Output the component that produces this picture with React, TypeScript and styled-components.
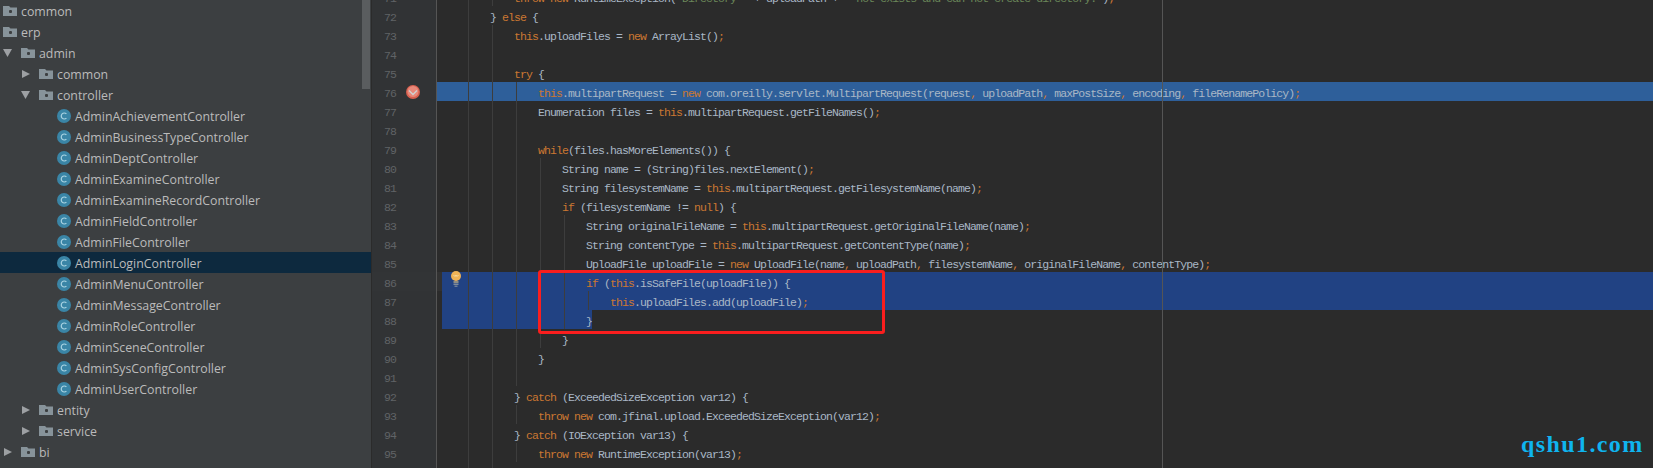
import React from "react";
import styled, { createGlobalStyle } from "styled-components";

const Global = createGlobalStyle`
  html, body { margin: 0; padding: 0; background: #2b2b2b; }
  #root { width: 1653px; height: 468px; overflow: hidden; }
`;

const Page = styled.div`
  position: relative;
  display: flex;
  width: 1653px;
  height: 468px;
  overflow: hidden;
`;

const Sidebar = styled.aside`
  position: relative;
  flex: none;
  width: 371px;
  height: 100%;
  overflow: hidden;
  background: #3c3f41;
`;

const Divider = styled.div`
  flex: none;
  width: 1px;
  background: #2b2b2b;
`;

const Scrollbar = styled.div`
  position: absolute;
  top: 0;
  right: 1px;
  width: 8px;
  height: 89px;
  background: #5a5d5f;
`;

const TreeRow = styled.div<{ $level: number; $selected?: boolean }>`
  display: flex;
  align-items: center;
  height: 21px;
  padding-left: ${(p) => 3 + p.$level * 18}px;
  background: ${(p) => (p.$selected ? "#0d293e" : "transparent")};
  color: #bbbbbb;
  font: 12.35px "Open Sans", sans-serif;
  white-space: nowrap;
`;

const TreeLabel = styled.span`
  padding-top: 1px;
`;

const ArrowBox = styled.svg`
  flex: none;
  width: 18px;
  height: 21px;
`;

const TreeIcon = styled.svg`
  flex: none;
  width: 14px;
  height: 21px;
  margin-right: 4px;
`;

const Editor = styled.main`
  position: relative;
  flex: 1;
  min-width: 0;
  height: 100%;
  overflow: hidden;
  background: #2b2b2b;
`;

const Lines = styled.div`
  margin-top: -13px;
`;

const Row = styled.div`
  display: flex;
  height: 19px;
`;

const Gutter = styled.div<{ $active?: boolean }>`
  flex: none;
  display: flex;
  align-items: center;
  box-sizing: border-box;
  width: 65px;
  height: 19px;
  padding-left: 12px;
  border-right: 1px solid #555555;
  background: ${(p) => (p.$active ? "#323436" : "#313335")};
`;

const LineNo = styled.span`
  flex: none;
  width: 22px;
  height: 19px;
  color: #606366;
  font: 11.5px/24px "Liberation Mono", monospace;
  letter-spacing: -0.9px;
`;

const Breakpoint = styled.svg`
  flex: none;
  width: 14px;
  height: 14px;
`;

type Tone = "plain" | "breakpoint" | "caret";

const CodeArea = styled.div<{ $tone: Tone }>`
  flex: 1;
  min-width: 0;
  display: flex;
  padding-left: 5px;
  background: ${(p) =>
    p.$tone === "breakpoint" ? "#2e5f9a" : p.$tone === "caret" ? "#323232" : "transparent"};
`;

const Code = styled.div<{ $selected?: "full" | "part" }>`
  display: flex;
  flex: ${(p) => (p.$selected === "part" ? "none" : 1)};
  width: ${(p) => (p.$selected === "part" ? "150px" : "auto")};
  height: 19px;
  min-width: 0;
  background: ${(p) => (p.$selected ? "#214283" : "transparent")};
  color: #a9b7c6;
  font: 11.5px/23px "Liberation Mono", monospace;
  letter-spacing: -0.9px;
  white-space: pre;
`;

const Indent = styled.span<{ $guide: boolean }>`
  flex: none;
  width: 24px;
  height: 19px;
  background: ${(p) =>
    p.$guide ? "linear-gradient(#3d3d3d, #3d3d3d) 2px 0 / 1px 100% no-repeat" : "none"};
`;

const Kw = styled.span`
  color: #cc7832;
`;

const Str = styled.span`
  color: #6a8759;
`;

const Margin = styled.div`
  position: absolute;
  top: 0;
  bottom: 0;
  left: 790px;
  width: 1px;
  background: #555555;
`;

const Bulb = styled.svg`
  position: absolute;
  left: 79px;
  top: 271px;
  width: 10px;
  height: 16px;
`;

const RedBox = styled.div`
  position: absolute;
  left: 166px;
  top: 270px;
  box-sizing: border-box;
  width: 347px;
  height: 64px;
  border: 3px solid #fa1e1e;
  border-radius: 3px;
`;

const Watermark = styled.div`
  position: absolute;
  left: 1149px;
  top: 430px;
  color: #0fb4ef;
  font: bold 24px/28px "Liberation Serif", serif;
  letter-spacing: 1.4px;
`;

type Node = { label: string; level: number; kind: "folder" | "class"; arrow?: "down" | "right"; selected?: boolean };

const tree: Node[] = [
  { label: "common", level: 0, kind: "folder" },
  { label: "erp", level: 0, kind: "folder" },
  { label: "admin", level: 0, kind: "folder", arrow: "down" },
  { label: "common", level: 1, kind: "folder", arrow: "right" },
  { label: "controller", level: 1, kind: "folder", arrow: "down" },
  ...[
    "AdminAchievementController",
    "AdminBusinessTypeController",
    "AdminDeptController",
    "AdminExamineController",
    "AdminExamineRecordController",
    "AdminFieldController",
    "AdminFileController",
    "AdminLoginController",
    "AdminMenuController",
    "AdminMessageController",
    "AdminRoleController",
    "AdminSceneController",
    "AdminSysConfigController",
    "AdminUserController",
  ].map((label): Node => ({ label, level: 3, kind: "class", selected: label === "AdminLoginController" })),
  { label: "entity", level: 1, kind: "folder", arrow: "right" },
  { label: "service", level: 1, kind: "folder", arrow: "right" },
  { label: "bi", level: 0, kind: "folder", arrow: "right" },
  { label: "", level: 0, kind: "folder", arrow: "right" },
];

type Line = { n: number; col?: number; text?: string; blank?: number; tone?: Tone; selected?: "full" | "part" };

const code: Line[] = [
  { n: 71, col: 12, text: 'throw new RuntimeException("Directory " + uploadPath + " not exists and can not create directory.");' },
  { n: 72, col: 8, text: "} else {" },
  { n: 73, col: 12, text: "this.uploadFiles = new ArrayList();" },
  { n: 74, blank: 3 },
  { n: 75, col: 12, text: "try {" },
  { n: 76, col: 16, tone: "breakpoint", text: "this.multipartRequest = new com.oreilly.servlet.MultipartRequest(request, uploadPath, maxPostSize, encoding, fileRenamePolicy);" },
  { n: 77, col: 16, text: "Enumeration files = this.multipartRequest.getFileNames();" },
  { n: 78, blank: 4 },
  { n: 79, col: 16, text: "while(files.hasMoreElements()) {" },
  { n: 80, col: 20, text: "String name = (String)files.nextElement();" },
  { n: 81, col: 20, text: "String filesystemName = this.multipartRequest.getFilesystemName(name);" },
  { n: 82, col: 20, text: "if (filesystemName != null) {" },
  { n: 83, col: 24, text: "String originalFileName = this.multipartRequest.getOriginalFileName(name);" },
  { n: 84, col: 24, text: "String contentType = this.multipartRequest.getContentType(name);" },
  { n: 85, col: 24, text: "UploadFile uploadFile = new UploadFile(name, uploadPath, filesystemName, originalFileName, contentType);" },
  { n: 86, col: 24, tone: "caret", selected: "full", text: "if (this.isSafeFile(uploadFile)) {" },
  { n: 87, col: 28, selected: "full", text: "this.uploadFiles.add(uploadFile);" },
  { n: 88, col: 24, selected: "part", text: "}" },
  { n: 89, col: 20, text: "}" },
  { n: 90, col: 16, text: "}" },
  { n: 91, blank: 4 },
  { n: 92, col: 12, text: "} catch (ExceededSizeException var12) {" },
  { n: 93, col: 16, text: "throw new com.jfinal.upload.ExceededSizeException(var12);" },
  { n: 94, col: 12, text: "} catch (IOException var13) {" },
  { n: 95, col: 16, text: "throw new RuntimeException(var13);" },
  { n: 96, col: 12, text: "}" },
];

const TOKEN = /(\b(?:this|new|else|try|while|if|null|throw|catch)\b|[;,]|"[^"]*")/g;

function Tokens({ text }: { text: string }) {
  return (
    <span>
      {text.split(TOKEN).map((part, i) => {
        if (i % 2 === 0) return part;
        return part.startsWith('"') ? <Str key={i}>{part}</Str> : <Kw key={i}>{part}</Kw>;
      })}
    </span>
  );
}

function Arrow({ dir }: { dir: "down" | "right" }) {
  return (
    <ArrowBox viewBox="0 0 18 21">
      <polygon points={dir === "down" ? "0,7 9,7 4.5,15" : "1,7 9,11 1,15"} fill="#9da0a3" />
    </ArrowBox>
  );
}

function FolderIcon() {
  return (
    <TreeIcon viewBox="0 0 14 21">
      <path d="M0 6h6l1.5 1.5H14V16H0z" fill="#87939a" />
      <rect x="6" y="10" width="3" height="3" rx="1" fill="#3c3f41" />
    </TreeIcon>
  );
}

function ClassIcon() {
  return (
    <TreeIcon viewBox="0 0 14 21">
      <circle cx="7" cy="11" r="7" fill="#3a85a6" />
      <path d="M9.4 8.9A3 3 0 1 0 9.4 13.1" fill="none" stroke="#a9d3e2" strokeWidth="1.2" />
    </TreeIcon>
  );
}

export default function App() {
  return (
    <Page>
      <Global />
      <Sidebar>
        {tree.map((node, i) => (
          <TreeRow key={i} $level={node.level} $selected={node.selected}>
            {node.arrow && <Arrow dir={node.arrow} />}
            {node.kind === "folder" ? <FolderIcon /> : <ClassIcon />}
            <TreeLabel>{node.label}</TreeLabel>
          </TreeRow>
        ))}
        <Scrollbar />
      </Sidebar>
      <Divider />
      <Editor>
        <Lines>
          {code.map((line) => {
            const level = line.blank ?? (line.col ?? 0) / 4;
            return (
              <Row key={line.n}>
                <Gutter $active={line.tone === "caret"}>
                  <LineNo>{line.n}</LineNo>
                  {line.tone === "breakpoint" && (
                    <Breakpoint viewBox="0 0 14 14">
                      <circle cx="7" cy="7" r="7" fill="#d8604f" />
                      <circle cx="7" cy="6.5" r="5.5" fill="#e8887a" />
                      <path d="M3 5.5 7 9.5 11 5.5" fill="none" stroke="#d0d0d0" strokeWidth="1.4" />
                    </Breakpoint>
                  )}
                </Gutter>
                <CodeArea $tone={line.tone ?? "plain"}>
                  <Code $selected={line.selected}>
                    {Array.from({ length: level }, (_, k) => (
                      <Indent key={k} $guide={k > 0} />
                    ))}
                    {line.text && <Tokens text={line.text} />}
                  </Code>
                </CodeArea>
              </Row>
            );
          })}
        </Lines>
        <Margin />
        <Bulb viewBox="0 0 10 16">
          <circle cx="5" cy="5" r="5" fill="#f1b356" />
          <path d="M2.5 4 4 5.5 5 4 6 5.5 7.5 4" fill="none" stroke="#fbe3b0" strokeWidth="0.8" />
          <rect x="2.5" y="10" width="5" height="2" fill="#8d8d86" />
          <rect x="2.5" y="12.5" width="5" height="1.5" fill="#7f8a99" />
          <rect x="3.5" y="14.5" width="3" height="1.5" fill="#6d7d95" />
        </Bulb>
        <RedBox />
        <Watermark>qshu1.com</Watermark>
      </Editor>
    </Page>
  );
}
